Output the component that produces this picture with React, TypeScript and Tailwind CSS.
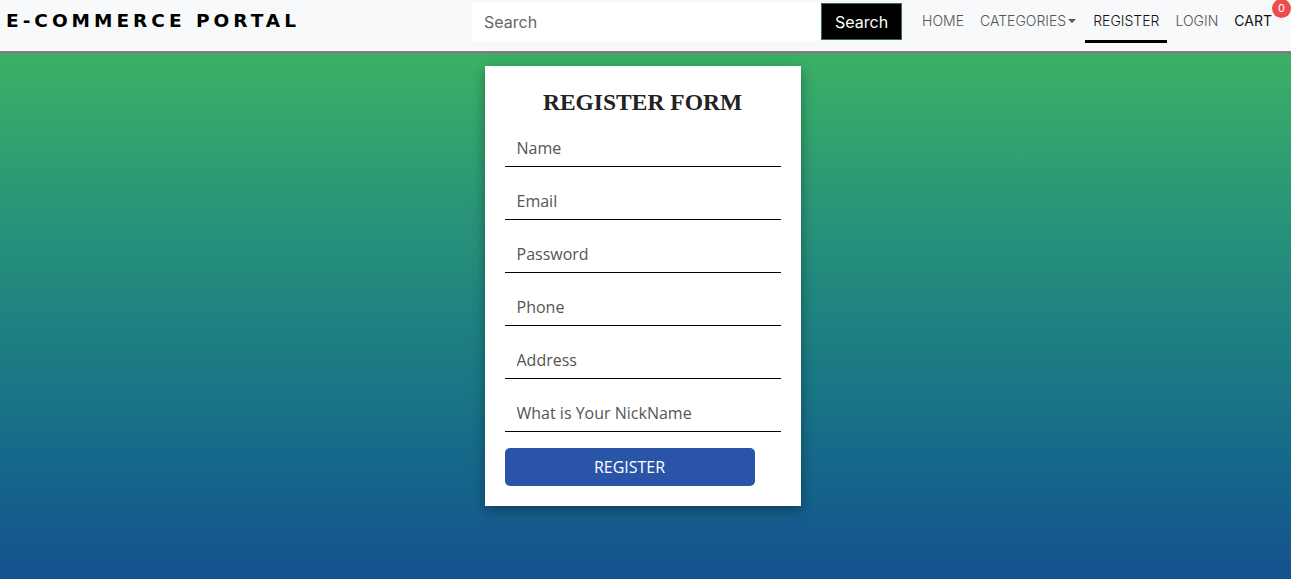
import React from "react";

const poppins = { fontFamily: "Inter, 'Noto Sans', sans-serif" };

export default function App() {
  const fields = ["Name", "Email", "Password", "Phone", "Address", "What is Your NickName"];
  return (
    <div className="min-h-[579px] flex flex-col bg-gradient-to-b from-[#42ba5a] to-[#15518f]">
      <nav className="h-[51px] bg-[#f8f9fa] flex items-center shadow-[0_3px_0_#7b807c] relative z-10" style={poppins}>
        <div className="pl-[6px] text-[18.5px] font-bold tracking-[4px] text-black font-['DejaVu_Sans',sans-serif] leading-none pb-[8px]">
          E-COMMERCE PORTAL
        </div>
        <div className="ml-auto flex items-center">
          <div className="flex items-center">
            <input
              placeholder="Search"
              className="w-[348px] h-[38px] bg-white px-[12px] text-[16px] text-[#555] placeholder:text-[#666] outline-none mb-[8px]"
              style={poppins}
            />
            <button className="ml-[1px] w-[81px] h-[37px] bg-black text-white text-[16px] border border-[#3b6b4e] mb-[8px]">
              Search
            </button>
          </div>
          <div className="flex items-center ml-[12px] text-[14px] font-light text-[#555]">
            <a className="px-[8px] pb-[11px] pt-[1px]">HOME</a>
            <a className="px-[8px] pb-[11px] pt-[1px] flex items-center">
              CATEGORIES
              <span className="ml-[2px] inline-block w-0 h-0 border-l-[4px] border-r-[4px] border-t-[4px] border-l-transparent border-r-transparent border-t-[#555]" />
            </a>
            <a className="ml-[1px] px-[8px] pb-[9px] pt-[1px] text-[#111] border-b-[3px] border-black">REGISTER</a>
            <a className="px-[8px] pb-[11px] pt-[1px]">LOGIN</a>
            <a className="relative pl-[8px] pr-[19px] pb-[11px] pt-[1px] text-[#111] font-normal">
              CART
              <span className="absolute right-[0px] top-[-10px] w-[19px] h-[19px] rounded-full bg-[#ee4d4d] text-white text-[11px] flex items-center justify-center">
                0
              </span>
            </a>
          </div>
        </div>
      </nav>
      <div className="flex justify-center pt-[15px] pb-[73px] pr-[6px]">
        <div className="w-[316px] bg-white shadow-[0_4px_12px_rgba(0,0,0,0.35)] px-[20px] pt-[22px] pb-[20px]">
          <h1 className="text-center text-[23.5px] font-bold text-[#222] leading-[28px] font-['Liberation_Serif',serif]">
            REGISTER FORM
          </h1>
          <div className="mt-[13px] flex flex-col">
            {fields.map((f) => (
              <input
                key={f}
                placeholder={f}
                className="h-[38px] mb-[15px] border-b border-black px-[12px] text-[16px] outline-none placeholder:text-[#555] font-['Open_Sans',sans-serif]"
              />
            ))}
          </div>
          <button className="mt-[1px] w-[250px] h-[38px] bg-[#2a54a8] rounded-[5px] text-white text-[16px] font-['Open_Sans',sans-serif]">
            REGISTER
          </button>
        </div>
      </div>
    </div>
  );
}
